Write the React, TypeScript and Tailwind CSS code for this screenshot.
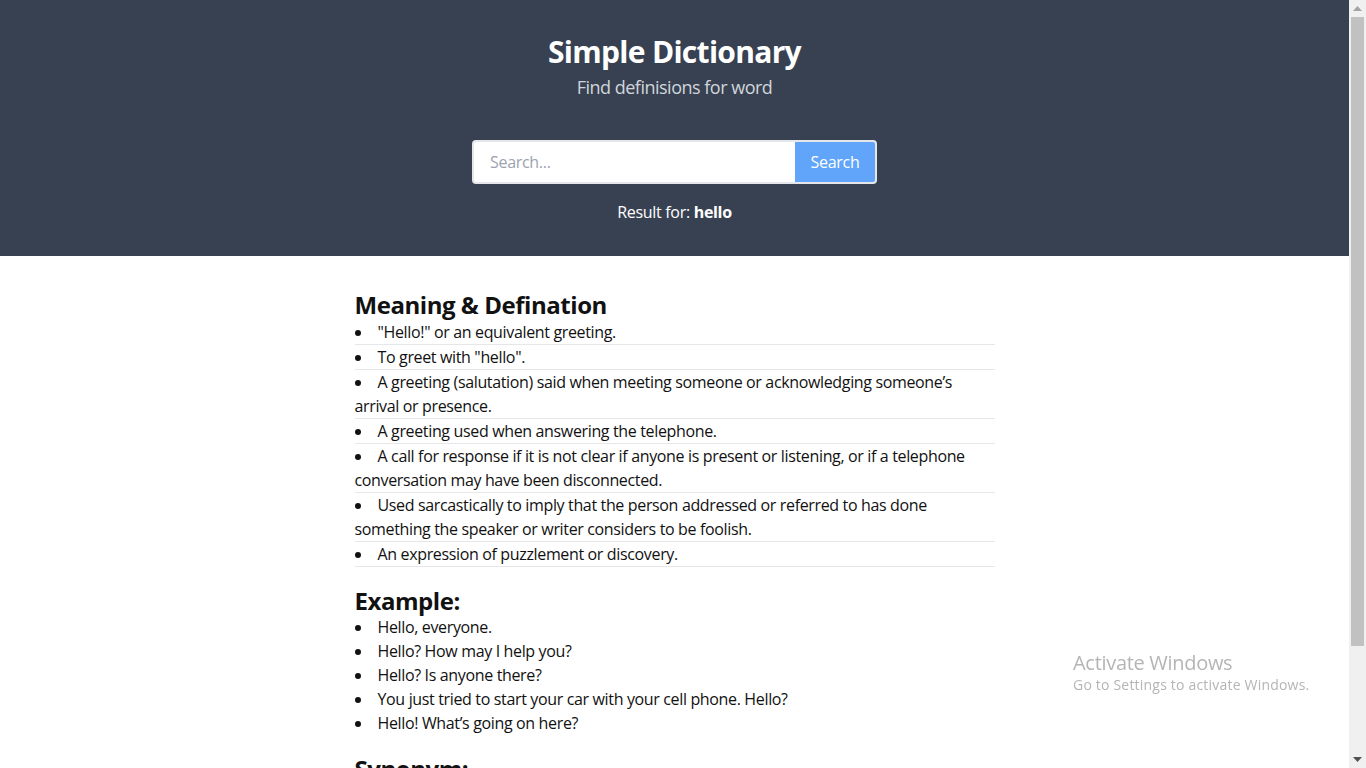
import { useState } from 'react'

const meanings = [
  '"Hello!" or an equivalent greeting.',
  'To greet with "hello".',
  'A greeting (salutation) said when meeting someone or acknowledging someone’s arrival or presence.',
  'A greeting used when answering the telephone.',
  'A call for response if it is not clear if anyone is present or listening, or if a telephone conversation may have been disconnected.',
  'Used sarcastically to imply that the person addressed or referred to has done something the speaker or writer considers to be foolish.',
  'An expression of puzzlement or discovery.',
]

const examples = [
  'Hello, everyone.',
  'Hello? How may I help you?',
  'Hello? Is anyone there?',
  'You just tried to start your car with your cell phone. Hello?',
  'Hello! What’s going on here?',
]

const synonyms = ['greeting', 'hi', 'hey', 'howdy']

// windows-style scrollbar of the browser window
function ScrollBar() {
  return (
    <div className="fixed right-0 top-0 flex h-screen w-[17px] flex-col bg-[#f0f0f0]">
      <div className="flex h-[17px] items-center justify-center">
        <svg width="9" height="5" viewBox="0 0 9 5">
          <path d="M0 5 L4.5 0 L9 5 Z" fill="#a3a3a3" />
        </svg>
      </div>
      <div className="flex-1 px-[2px]">
        <div className="h-[629px] bg-[#c1c1c1]" />
      </div>
      <div className="flex h-[17px] items-center justify-center">
        <svg width="9" height="5" viewBox="0 0 9 5">
          <path d="M0 0 L9 0 L4.5 5 Z" fill="#505050" />
        </svg>
      </div>
    </div>
  )
}

export default function App() {
  const [query, setQuery] = useState('')

  return (
    <div className="min-h-screen bg-white pr-[17px] font-['Open_Sans',sans-serif] text-[#111]">
      <header className="flex h-[256px] flex-col items-center bg-[#374151] pt-[31px] text-white">
        <h1 className="text-[30px] font-bold leading-[42px] tracking-[-0.7px]">Simple Dictionary</h1>
        <p className="text-[18px] leading-[28px] tracking-[-0.5px] text-[#d1d5db]">Find definisions for word</p>

        <div className="mt-[39px] flex h-[44px] w-[405px] overflow-hidden rounded-[4px] border-2 border-[#e5e7eb] bg-white">
          <input
            value={query}
            onChange={(e) => setQuery(e.target.value)}
            placeholder="Search..."
            className="min-w-0 flex-1 px-4 text-[16px] tracking-[-0.3px] text-gray-800 outline-none placeholder:text-[#9ca3af]"
          />
          <button className="w-[80px] bg-[#60a5fa] text-[16px] tracking-[-0.3px] text-white">Search</button>
        </div>

        <p className="mt-[16px] text-[16px] leading-[24px] tracking-[-0.3px]">
          Result for: <span className="font-bold">hello</span>
        </p>
      </header>

      <main className="mx-auto w-[640px] pb-[17px] pt-[33px] tracking-[-0.35px]">
        <h2 className="text-[24px] font-bold leading-[32px] tracking-[-0.45px]">Meaning &amp; Defination</h2>
        <ul className="-mt-px list-inside list-disc">
          {meanings.map((m) => (
            <li key={m} className="border-b border-[#e5e7eb] text-[16px] leading-[24px]">
              {m}
            </li>
          ))}
        </ul>

        <h2 className="mt-[18px] text-[24px] font-bold leading-[32px] tracking-[-0.45px]">Example:</h2>
        <ul className="-mt-[2px] list-inside list-disc">
          {examples.map((m) => (
            <li key={m} className="text-[16px] leading-[24px]">
              {m}
            </li>
          ))}
        </ul>

        <h2 className="mt-[18px] text-[24px] font-bold leading-[32px] tracking-[-0.45px]">Synonym:</h2>
        <ul className="-mt-[2px] list-inside list-disc">
          {synonyms.map((m) => (
            <li key={m} className="text-[16px] leading-[24px]">
              {m}
            </li>
          ))}
        </ul>
      </main>

      <ScrollBar />

      <div className="pointer-events-none fixed left-[1073px] top-[651px] text-[#b5b5b5]">
        <p className="text-[20px] leading-[24px] tracking-[-0.3px]">Activate Windows</p>
        <p className="text-[14px] leading-[20px] tracking-[0.2px]">Go to Settings to activate Windows.</p>
      </div>
    </div>
  )
}
